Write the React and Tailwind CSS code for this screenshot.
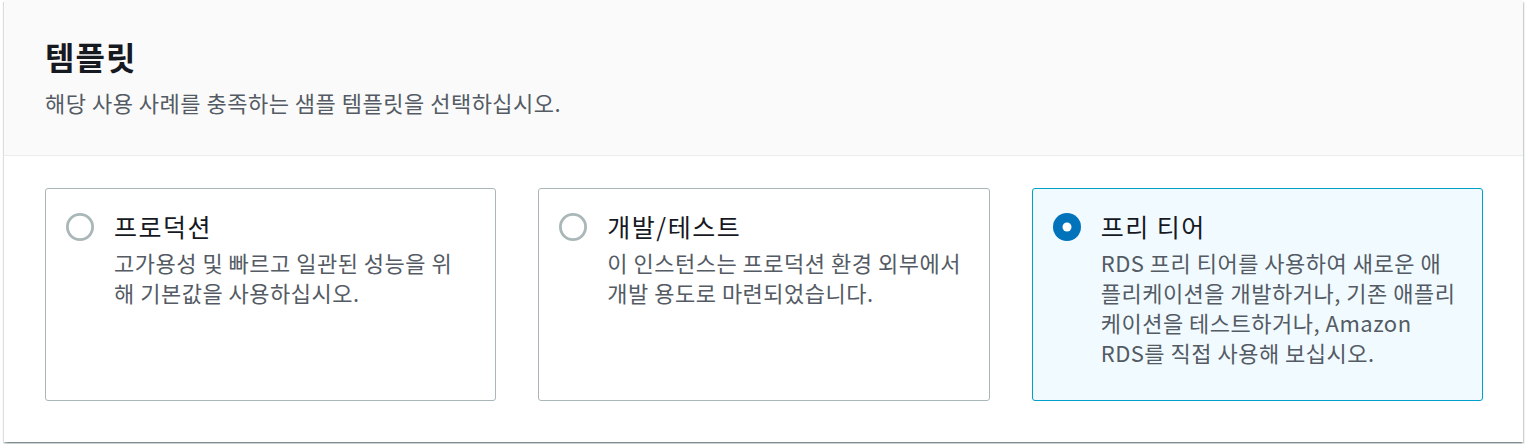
import React, { useState } from 'react';

const templates = [
  {
    id: 'production',
    title: '프로덕션',
    lines: ['고가용성 및 빠르고 일관된 성능을 위', '해 기본값을 사용하십시오.'],
  },
  {
    id: 'devtest',
    title: '개발/테스트',
    lines: ['이 인스턴스는 프로덕션 환경 외부에서', '개발 용도로 마련되었습니다.'],
  },
  {
    id: 'freetier',
    title: '프리 티어',
    lines: [
      'RDS 프리 티어를 사용하여 새로운 애',
      '플리케이션을 개발하거나, 기존 애플리',
      '케이션을 테스트하거나, Amazon',
      'RDS를 직접 사용해 보십시오.',
    ],
  },
];

const Radio = ({ checked }) => (
  <svg width="28" height="28" viewBox="0 0 28 28" className="shrink-0">
    {checked ? (
      <>
        <circle cx="14" cy="14" r="14" fill="#0073bb" />
        <circle cx="14" cy="14" r="4.5" fill="#ffffff" />
      </>
    ) : (
      <circle cx="14" cy="14" r="12.6" fill="#ffffff" stroke="#aab7b8" strokeWidth="2.8" />
    )}
  </svg>
);

const App = () => {
  const [selected, setSelected] = useState('freetier');

  return (
    <div
      className="min-h-[444px] bg-white pl-[4px] pr-[5px]"
      style={{ fontFamily: '"Noto Sans CJK KR", "Noto Sans", sans-serif' }}
    >
      <div className="bg-white shadow-[0_1.5px_1.5px_0_rgba(0,28,36,0.3),1.5px_1.5px_1.5px_0_rgba(0,28,36,0.15),-1.5px_1.5px_1.5px_0_rgba(0,28,36,0.15)]">
        {/* Header */}
        <div className="bg-[#fafafa] border-b border-[#eaeded] px-[41px] pt-[35px] pb-[38px]">
          <h2 className="text-[32px] leading-[42px] font-bold tracking-[1px] text-[#16191f]">템플릿</h2>
          <p className="mt-[10px] text-[22px] leading-[30px] tracking-[0.5px] text-[#545b64]">
            해당 사용 사례를 충족하는 샘플 템플릿을 선택하십시오.
          </p>
        </div>

        {/* Template tiles */}
        <div className="grid grid-cols-3 gap-[42px] pl-[41px] pr-[40px] pt-[32px] pb-[41px]">
          {templates.map((t) => {
            const checked = selected === t.id;
            return (
              <div
                key={t.id}
                onClick={() => setSelected(t.id)}
                className={`flex cursor-pointer gap-[20px] rounded-[3px] border-[1.5px] px-[20px] pt-[21px] pb-[33px] ${
                  checked ? 'border-[#00a1c9] bg-[#f1faff]' : 'border-[#aab7b8] bg-white'
                }`}
              >
                <div className="pt-[3px]">
                  <Radio checked={checked} />
                </div>
                <div className="min-w-0">
                  <div className="text-[25px] leading-[33px] tracking-[1.5px] text-[#16191f]">{t.title}</div>
                  <div className="mt-[4px] text-[22px] leading-[30px] tracking-[0.5px] text-[#545b64]">
                    {t.lines.map((line) => (
                      <span key={line} className="block whitespace-nowrap">
                        {line}
                      </span>
                    ))}
                  </div>
                </div>
              </div>
            );
          })}
        </div>
      </div>
    </div>
  );
};

export default App;
